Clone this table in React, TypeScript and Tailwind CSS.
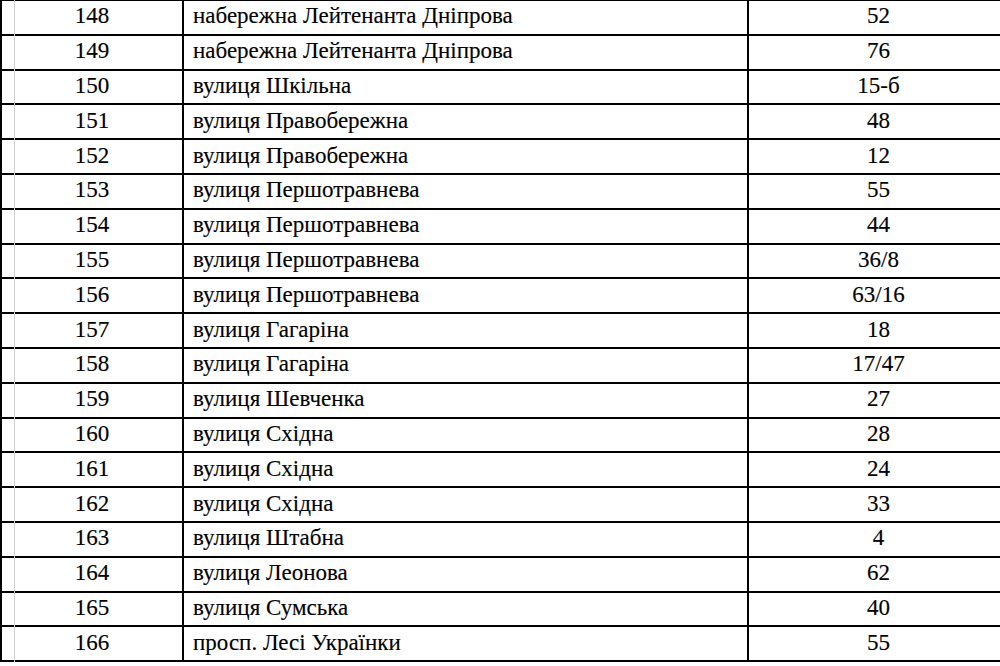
import React from 'react'

const rows: [string, string, string][] = [
  ['148', 'набережна Лейтенанта Дніпрова', '52'],
  ['149', 'набережна Лейтенанта Дніпрова', '76'],
  ['150', 'вулиця Шкільна', '15-б'],
  ['151', 'вулиця Правобережна', '48'],
  ['152', 'вулиця Правобережна', '12'],
  ['153', 'вулиця Першотравнева', '55'],
  ['154', 'вулиця Першотравнева', '44'],
  ['155', 'вулиця Першотравнева', '36/8'],
  ['156', 'вулиця Першотравнева', '63/16'],
  ['157', 'вулиця Гагаріна', '18'],
  ['158', 'вулиця Гагаріна', '17/47'],
  ['159', 'вулиця Шевченка', '27'],
  ['160', 'вулиця Східна', '28'],
  ['161', 'вулиця Східна', '24'],
  ['162', 'вулиця Східна', '33'],
  ['163', 'вулиця Штабна', '4'],
  ['164', 'вулиця Леонова', '62'],
  ['165', 'вулиця Сумська', '40'],
  ['166', 'просп. Лесі Українки', '55'],
]

export default function App() {
  return (
    <div className="w-[1000px] h-[666px] overflow-hidden bg-white">
      <div className="relative w-[1008px] -mt-[1px] border-l-2 border-black font-['Liberation_Serif','Times_New_Roman',serif] text-[23px] leading-none text-black [-webkit-text-stroke:0.15px_#000]">
        {/* faint grid line inside first column */}
        <div className="absolute left-[12px] top-0 bottom-0 w-px bg-[#cfcfcf]" />
        {rows.map(([num, street, house]) => (
          <div key={num} className="flex h-[34.8px] border-t-2 border-black">
            <div className="w-[180px] flex items-center justify-center pb-[3px]">
              {num}
            </div>
            <div className="w-[565px] border-l-2 border-black flex items-center pl-[9px] pb-[3px]">
              {street}
            </div>
            <div className="flex-1 border-l-2 border-black flex items-center justify-center pb-[3px]">
              {house}
            </div>
          </div>
        ))}
        <div className="border-t-2 border-black" />
      </div>
    </div>
  )
}
